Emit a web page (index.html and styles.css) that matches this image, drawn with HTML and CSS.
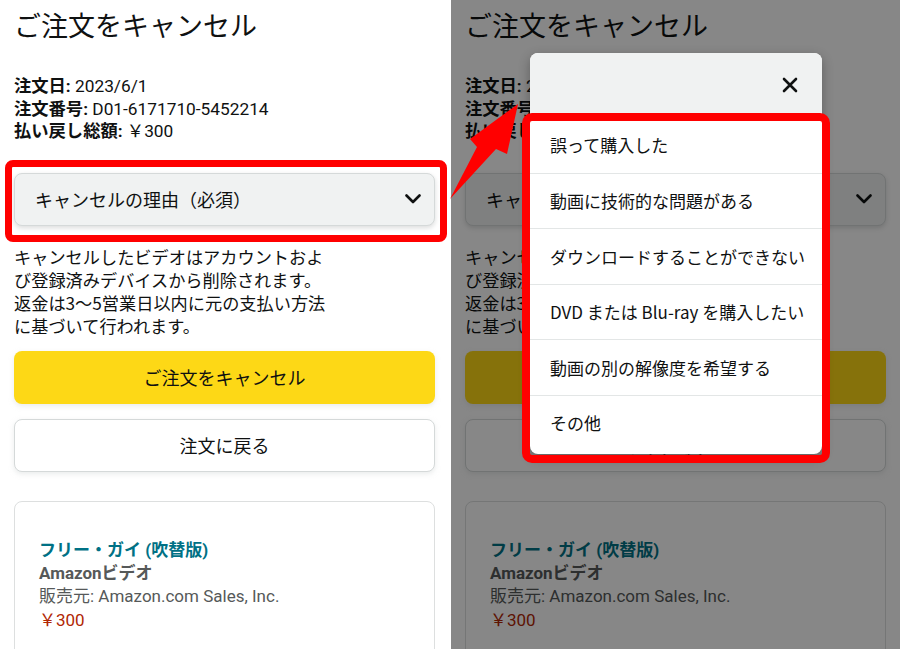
FILE: index.html
```html
<!DOCTYPE html>
<html lang="ja">
<head>
<meta charset="utf-8">
<title>ご注文をキャンセル</title>
<link rel="stylesheet" href="styles.css">
</head>
<body>
<div class="stage">
  <section class="phone">
    <h1 class="title">ご注文をキャンセル</h1>
    <div class="details">
      <div><b>注文日:</b> 2023/6/1</div>
      <div><b>注文番号:</b> D01-6171710-5452214</div>
      <div><b>払い戻し総額:</b> ￥300</div>
    </div>
    <div class="select">
      <span>キャンセルの理由（必須）</span>
      <svg class="chev" width="16" height="10" viewBox="0 0 16 10"><polyline points="1.5,1.5 8,8 14.5,1.5" fill="none" stroke="#0F1111" stroke-width="2.6" stroke-linecap="round" stroke-linejoin="round"/></svg>
    </div>
    <p class="note">キャンセルしたビデオはアカウントおよ<br>び登録済みデバイスから削除されます。<br>返金は3〜5営業日以内に元の支払い方法<br>に基づいて行われます。</p>
    <div class="btn btn-primary">ご注文をキャンセル</div>
    <div class="btn btn-secondary">注文に戻る</div>
    <div class="card">
      <div class="card-title">フリー・ガイ (吹替版)</div>
      <div class="card-brand">Amazonビデオ</div>
      <div class="card-seller">販売元: Amazon.com Sales, Inc.</div>
      <div class="card-price">￥300</div>
    </div>
  </section>

  <section class="phone">
    <h1 class="title">ご注文をキャンセル</h1>
    <div class="details">
      <div><b>注文日:</b> 2023/6/1</div>
      <div><b>注文番号:</b> D01-6171710-5452214</div>
      <div><b>払い戻し総額:</b> ￥300</div>
    </div>
    <div class="select">
      <span>キャンセルの理由（必須）</span>
      <svg class="chev" width="16" height="10" viewBox="0 0 16 10"><polyline points="1.5,1.5 8,8 14.5,1.5" fill="none" stroke="#0F1111" stroke-width="2.6" stroke-linecap="round" stroke-linejoin="round"/></svg>
    </div>
    <p class="note">キャンセルしたビデオはアカウントおよ<br>び登録済みデバイスから削除されます。<br>返金は3〜5営業日以内に元の支払い方法<br>に基づいて行われます。</p>
    <div class="btn btn-primary">ご注文をキャンセル</div>
    <div class="btn btn-secondary">注文に戻る</div>
    <div class="card">
      <div class="card-title">フリー・ガイ (吹替版)</div>
      <div class="card-brand">Amazonビデオ</div>
      <div class="card-seller">販売元: Amazon.com Sales, Inc.</div>
      <div class="card-price">￥300</div>
    </div>
    <div class="scrim"></div>
    <div class="sheet">
      <div class="sheet-head">
        <svg class="close" width="16" height="16" viewBox="0 0 16 16"><path d="M2 2 L14 14 M14 2 L2 14" stroke="#0F1111" stroke-width="2.6" stroke-linecap="round"/></svg>
      </div>
      <ul class="options">
        <li>誤って購入した</li>
        <li>動画に技術的な問題がある</li>
        <li>ダウンロードすることができない</li>
        <li>DVD または Blu-ray を購入したい</li>
        <li>動画の別の解像度を希望する</li>
        <li>その他</li>
      </ul>
    </div>
  </section>

  <div class="mark mark-select"></div>
  <div class="mark mark-list"></div>
  <svg class="arrow" width="900" height="649" viewBox="0 0 900 649">
    <polygon points="450,199 477,147 470,139 518,104 507,154 496,149" fill="#FF0000"/>
  </svg>
</div>
</body>
</html>
```

FILE: styles.css
```css
* { box-sizing: border-box; }

html, body {
  margin: 0;
  padding: 0;
  background: #ffffff;
}

.stage {
  position: relative;
  width: 900px;
  height: 649px;
  display: flex;
  gap: 2px;
  overflow: hidden;
  background: #ffffff;
  font-family: Roboto, "Noto Sans CJK JP", sans-serif;
  color: #0F1111;
}

.phone {
  position: relative;
  width: 449px;
  height: 649px;
  flex: none;
  padding: 0 14px;
  background: #ffffff;
  overflow: hidden;
}

.title {
  margin: 0;
  padding-top: 6px;
  font-size: 27px;
  line-height: 38px;
  font-weight: 400;
  font-family: "Noto Sans CJK JP", sans-serif;
}

.details {
  margin-top: 31px;
  font-size: 17.3px;
  line-height: 22.5px;
}

.details b {
  font-weight: 700;
}

.select {
  margin-top: 30px;
  height: 53px;
  display: flex;
  align-items: center;
  justify-content: space-between;
  padding: 0 13px 0 20px;
  background: #F0F2F2;
  border: 1px solid #D5D9D9;
  border-radius: 8px;
  box-shadow: 0 2px 5px rgba(15, 17, 17, 0.15);
  font-family: "Noto Sans CJK JP", sans-serif;
  font-size: 18px;
}

.chev { display: block; }

.note {
  margin: 19px 0 0;
  font-family: "Noto Sans CJK JP", sans-serif;
  font-size: 17.2px;
  line-height: 23.3px;
}

.btn {
  height: 53px;
  display: flex;
  align-items: center;
  justify-content: center;
  border-radius: 8px;
  font-family: "Noto Sans CJK JP", sans-serif;
  font-size: 18px;
}

.btn-primary {
  margin-top: 13px;
  background: #FDD816;
  box-shadow: 0 2px 5px rgba(213, 217, 217, 0.5);
}

.btn-secondary {
  margin-top: 15px;
  background: #ffffff;
  border: 1px solid #D5D9D9;
  box-shadow: 0 2px 5px rgba(213, 217, 217, 0.5);
}

.card {
  margin-top: 29px;
  height: 200px;
  border: 1px solid #DDDFDF;
  border-radius: 8px;
  padding: 37px 24px;
  font-size: 17px;
  line-height: 23.3px;
}

.card-title {
  color: #007185;
  font-weight: 700;
}

.card-brand {
  color: #565959;
  font-weight: 700;
}

.card-seller {
  color: #565959;
}

.card-price {
  color: #B12704;
}

.scrim {
  position: absolute;
  inset: 0;
  background: rgba(0, 0, 0, 0.47);
}

.sheet {
  position: absolute;
  left: 79px;
  top: 53px;
  width: 292px;
  background: #ffffff;
  border-radius: 8px;
  overflow: hidden;
  padding-bottom: 4px;
  box-shadow: 0 4px 12px rgba(0, 0, 0, 0.3);
  font-family: "Noto Sans CJK JP", sans-serif;
}

.sheet-head {
  height: 64px;
  background: #F0F2F2;
  display: flex;
  align-items: center;
  justify-content: flex-end;
  padding-right: 24px;
  border-bottom: 1px solid #E3E6E6;
}

.close { display: block; }

.options {
  list-style: none;
  margin: 0;
  padding: 0;
}

.options li {
  height: 55.5px;
  display: flex;
  align-items: center;
  padding-left: 20px;
  font-size: 17px;
  color: #0F1111;
  border-top: 1px solid #E3E6E6;
}

.options li:first-child {
  border-top: none;
}

.mark {
  position: absolute;
  border: 7px solid #FF0000;
  border-radius: 8px;
  pointer-events: none;
}

.mark-select {
  left: 5px;
  top: 160px;
  width: 442px;
  height: 82px;
}

.mark-list {
  left: 522px;
  top: 113px;
  width: 308px;
  height: 350px;
  border-width: 8px;
  border-radius: 10px;
}

.arrow {
  position: absolute;
  left: 0;
  top: 0;
  pointer-events: none;
}
```
